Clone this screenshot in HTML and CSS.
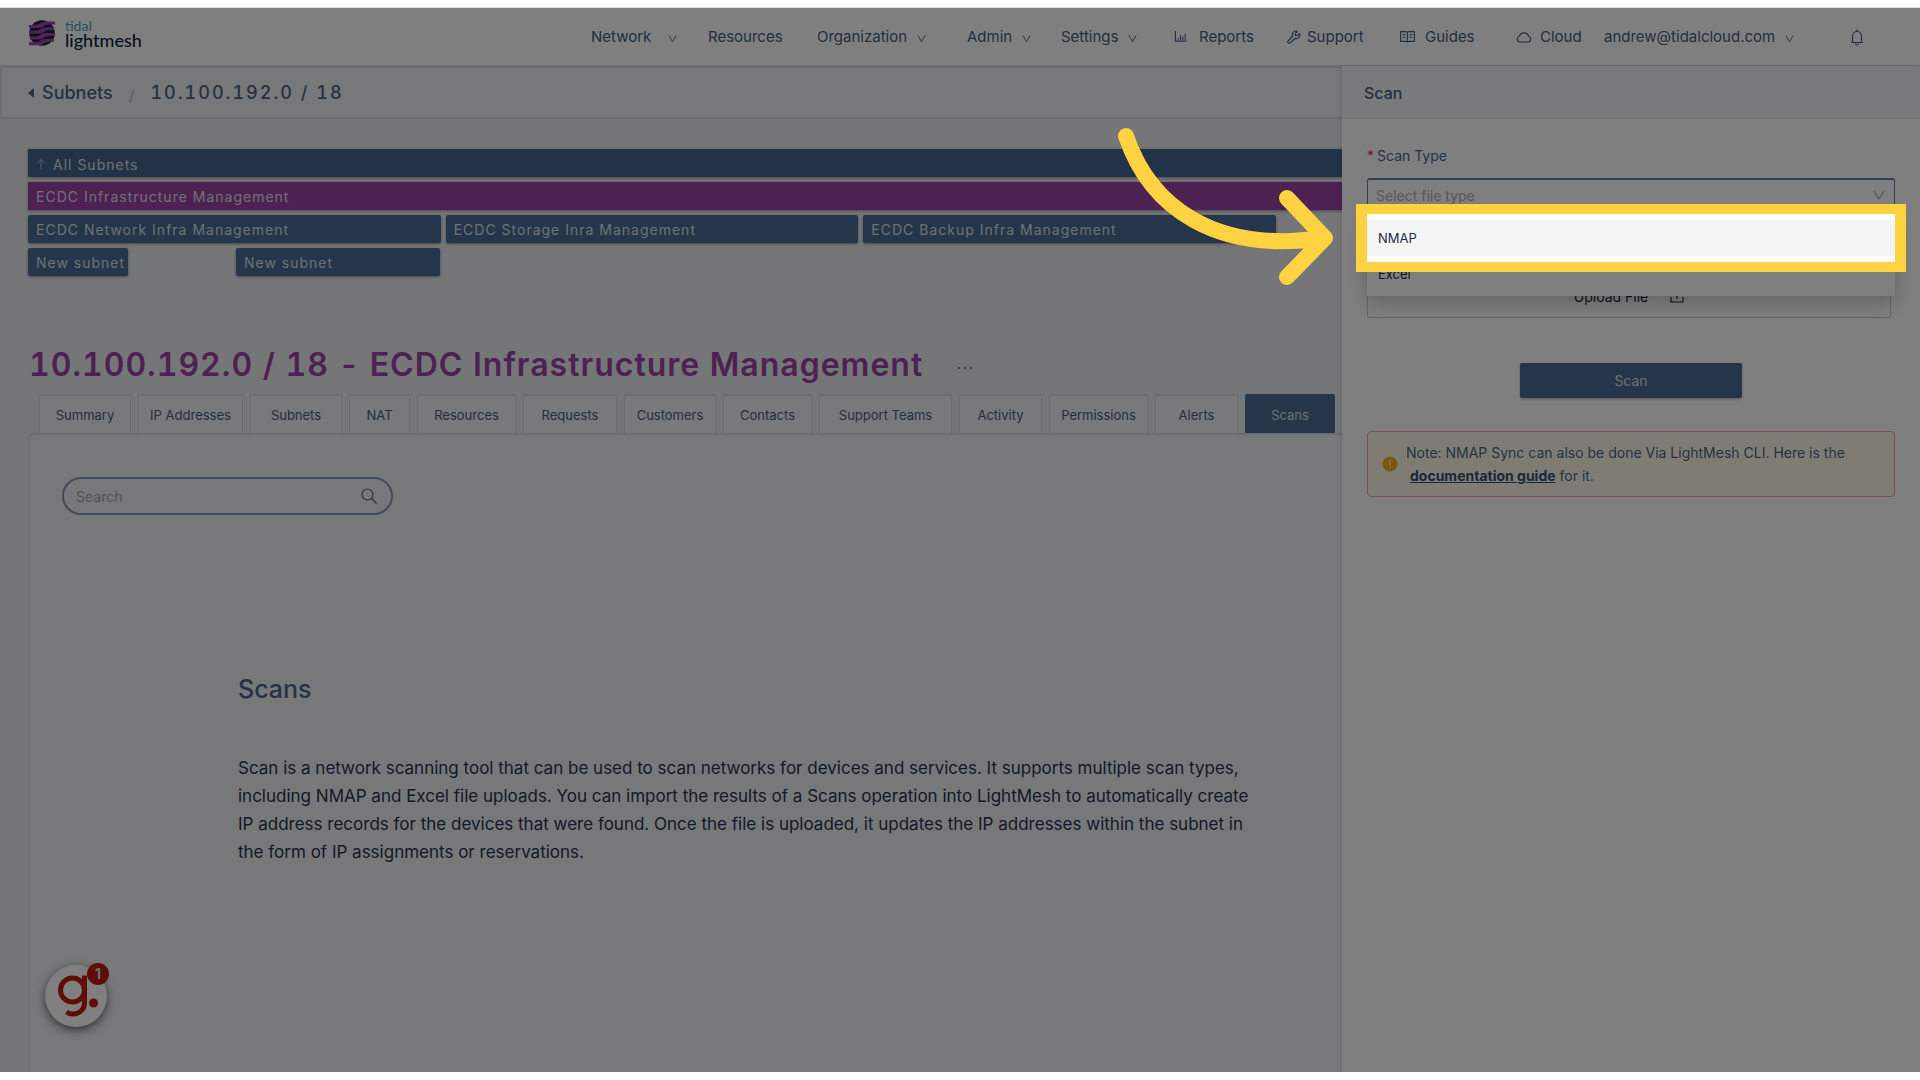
FILE: index.html
```html
<!DOCTYPE html>
<html lang="en">
<head>
<meta charset="utf-8">
<title>Tidal LightMesh - Scans</title>
<link rel="stylesheet" href="styles.css">
</head>
<body>
<svg class="defs" aria-hidden="true">
  <symbol id="chevron" viewBox="0 0 10 10"><path d="M1 1.500 5 8.500 9 1.500" fill="none" stroke="currentColor" stroke-width="1"/></symbol>
</svg>
<div class="app">
  <header class="topbar">
    <a class="logo" href="#" aria-label="Tidal LightMesh">
      <svg class="logo-mark" viewBox="0 0 26 26" aria-hidden="true">
        <circle cx="13" cy="13" r="12.800" fill="#12263c"/>
        <g fill="#a044b0">
          <path d="M0 5h6c5 0 6-3.500 11-3.500h9v3h-6c-5 0-5 3.500-10 3.500H0z"/>
          <path d="M0 10.800h6c5 0 6-3.500 11-3.500h8v3h-5c-5 0-5 3.500-10 3.500H0z"/>
          <path d="M1 16.500h5c5 0 6-3.500 11-3.500h9v3h-6c-5 0-5 3.500-10 3.500H1z"/>
          <path d="M0 22.300h6c5 0 6-3.500 11-3.500h8v3h-5c-5 0-5 3.500-10 3.500H0z"/>
        </g>
      </svg>
      <span class="logo-text"><span class="logo-top">tidal</span><span class="logo-name">lightmesh</span></span>
    </a>
    <nav class="nav">
      <a href="#">Network<svg class="chev chev-wide"><use href="#chevron"/></svg></a>
      <a href="#">Resources</a>
      <a href="#">Organization<svg class="chev"><use href="#chevron"/></svg></a>
      <a href="#">Admin<svg class="chev"><use href="#chevron"/></svg></a>
      <a href="#">Settings<svg class="chev"><use href="#chevron"/></svg></a>
      <a href="#"><svg class="ico ico-chart" viewBox="0 0 14 14"><path d="M1.500 1v11H13.500M4.500 10.500V8.500M7 10.500V5.500M9.500 10.500V7M12 10.500V4" fill="none" stroke="currentColor" stroke-width="1.200"/></svg>Reports</a>
      <a href="#"><svg class="ico" viewBox="0 0 14 14"><path d="M12.400 3.600 10.300 5.700 8.400 5.500 8.200 3.700 10.300 1.600C8.700.9 7 1.200 6 2.500 5.200 3.500 5.100 4.800 5.600 6L1.200 10.800C.6 11.500.6 12.200 1.200 12.800s1.400.6 2 0L8 8.400c1.300.5 2.700.2 3.700-.8 1.100-1.100 1.300-2.700.7-4z" fill="none" stroke="currentColor" stroke-width="1.200" stroke-linejoin="round"/></svg>Support</a>
      <a href="#"><svg class="ico ico-book" viewBox="0 0 15 14"><path d="M.6 1.600h5c1 0 1.900.4 1.900 1 0-.6.900-1 1.900-1h5v9.800h-5c-1 0-1.900.4-1.900 1.100 0-.7-.9-1.100-1.900-1.100h-5zM7.500 2.600v9.900M2.500 4.700h3M2.500 7.200h3M9.500 4.700h3M9.500 7.200h3" fill="none" stroke="currentColor" stroke-width="1.100"/></svg>Guides</a>
      <a href="#"><svg class="ico ico-cloud" viewBox="0 0 16 14"><path d="M4 12h8a3 3 0 0 0 .700-5.800A5 5 0 0 0 3.300 6.200 3 3 0 0 0 4 12z" fill="none" stroke="currentColor" stroke-width="1.200"/></svg>Cloud</a>
      <a href="#">andrew@tidalcloud.com<svg class="chev"><use href="#chevron"/></svg></a>
      <a href="#" aria-label="Notifications"><svg class="bell" viewBox="0 0 14 18"><path d="M1 14.500h12M2.500 14.500V8a4.500 4.500 0 0 1 9 0v6.500M7 3.500V1.500M5.500 15.500a1.500 1.500 0 0 0 3 0" fill="none" stroke="currentColor" stroke-width="1.200"/></svg></a>
    </nav>
  </header>

  <main class="main">
    <div class="crumbs">
      <a class="crumb-back" href="#"><svg viewBox="0 0 6 10" aria-hidden="true"><path d="M6 0v10L0 5z" fill="currentColor"/></svg>Subnets</a>
      <span class="crumb-sep">/</span>
      <span class="crumb-net">10.100.192.0 / 18</span>
    </div>

    <section class="subnets">
      <a class="bar bar-all" href="#"><svg viewBox="0 0 10 12" aria-hidden="true"><path d="M5 11V1.500M1 5.500l4-4 4 4" fill="none" stroke="currentColor"/></svg>All Subnets</a>
      <a class="bar bar-current" href="#">ECDC Infrastructure Management</a>
      <div class="bar-row">
        <a class="bar" href="#">ECDC Network Infra Management</a>
        <a class="bar" href="#">ECDC Storage Inra Management</a>
        <a class="bar" href="#">ECDC Backup Infra Management</a>
      </div>
      <div class="bar-row bar-row-small">
        <a class="bar" href="#">New subnet</a>
        <a class="bar" href="#">New subnet</a>
      </div>
    </section>

    <div class="heading">
      <h1>10.100.192.0 / 18 - ECDC Infrastructure Management</h1>
      <button class="more" type="button" aria-label="More actions"><svg viewBox="0 0 16 4"><circle cx="2" cy="2" r="1" fill="currentColor"/><circle cx="8" cy="2" r="1" fill="currentColor"/><circle cx="14" cy="2" r="1" fill="currentColor"/></svg></button>
    </div>

    <div class="tabs">
      <button type="button">Summary</button>
      <button type="button">IP Addresses</button>
      <button type="button">Subnets</button>
      <button type="button">NAT</button>
      <button type="button">Resources</button>
      <button type="button">Requests</button>
      <button type="button">Customers</button>
      <button type="button">Contacts</button>
      <button type="button">Support Teams</button>
      <button type="button">Activity</button>
      <button type="button">Permissions</button>
      <button type="button">Alerts</button>
      <button type="button" class="active">Scans</button>
    </div>

    <section class="content">
      <div class="search">
        <input type="text" placeholder="Search" aria-label="Search">
        <svg viewBox="0 0 16 16" aria-hidden="true"><circle cx="6.500" cy="6.500" r="5.500" fill="none" stroke="currentColor" stroke-width="1.200"/><path d="M10.500 10.500 15.500 15.500" stroke="currentColor" stroke-width="1.200"/></svg>
      </div>
      <article class="intro">
        <h2>Scans</h2>
        <p>Scan is a network scanning tool that can be used to scan networks for devices and services. It supports multiple scan types, including NMAP and Excel file uploads. You can import the results of a Scans operation into LightMesh to automatically create IP address records for the devices that were found. Once the file is uploaded, it updates the IP addresses within the subnet in the form of IP assignments or reservations.</p>
      </article>
    </section>
  </main>

  <button class="helper" type="button" aria-label="Help">
    <svg viewBox="0 0 62 62" aria-hidden="true"><g fill="none" stroke="#bc1a10" stroke-width="5"><circle cx="27.500" cy="25" r="12"/><path d="M39.500 10.500V38c0 9-10.500 14-18 9"/></g><circle cx="48.500" cy="38" r="4.500" fill="#bc1a10"/></svg>
    <span class="helper-count">1</span>
  </button>

  <aside class="drawer">
    <h2 class="drawer-title">Scan</h2>
    <form class="drawer-body">
      <label class="field-label" for="scan-type"><span class="req">*</span>Scan Type</label>
      <div class="select-wrap">
        <select id="scan-type"><option>Select file type</option></select>
        <svg class="select-arrow" viewBox="0 0 12 12" aria-hidden="true"><path d="M1 2l5 8 5-8" fill="none" stroke="currentColor"/></svg>
        <div class="popup">
          <ul role="listbox" aria-label="Scan Type">
            <li class="hover" role="option" aria-selected="false">NMAP</li>
            <li role="option" aria-selected="false">Excel</li>
          </ul>
          <div class="spotlight"></div>
          <svg class="arrow" viewBox="0 0 220 164" aria-hidden="true"><path d="M11 12C35 83 100 130 208 114M172 74l38 40-38 39" fill="none" stroke="#ffd242" stroke-width="16" stroke-linecap="round" stroke-linejoin="round"/></svg>
        </div>
      </div>
      <button class="upload" type="button">Upload File<svg viewBox="0 0 14 14" aria-hidden="true"><path d="M1 8v5h12V8M7 10V1.500M4 4.500l3-3 3 3" fill="none" stroke="currentColor" stroke-width="1.200"/></svg></button>
      <button class="submit" type="button">Scan</button>
      <div class="note">
        <svg viewBox="0 0 16 16" aria-hidden="true"><circle cx="8" cy="8" r="7.500" fill="#faad14"/><path d="M8 4v5M8 10.500v1.500" stroke="#fff" stroke-width="1.300"/></svg>
        <p>Note: NMAP Sync can also be done Via LightMesh CLI. Here is the <a href="#">documentation guide</a> for it.</p>
      </div>
    </form>
  </aside>
</div>
</body>
</html>
```
FILE: styles.css
```css
* { box-sizing: border-box; }
body {
  margin: 0;
  padding: 7px 0 8px;
  background: #fff;
  font-family: Inter, "Liberation Sans", sans-serif;
  font-size: 14px;
  color: #4a6588;
}
a { color: inherit; text-decoration: none; }
button { font: inherit; color: inherit; cursor: pointer; }
h1, h2, p, ul { margin: 0; padding: 0; }
.defs { position: absolute; width: 0; height: 0; }

.app {
  position: relative;
  display: flex;
  flex-direction: column;
  min-height: calc(100vh - 15px);
  overflow: hidden;
  background: #eaecef;
  border-top: 1px solid #ddd;
}

/* Top navigation */
.topbar {
  display: flex;
  justify-content: space-between;
  height: 58px;
  padding-left: 29px;
  background: #fff;
  border-bottom: 1px solid #dcdfee;
}
.logo { display: flex; align-items: center; gap: 10px; padding-bottom: 7px; }
.logo-mark { width: 26px; height: 26px; }
.logo-text { display: flex; flex-direction: column; font-family: Lato, sans-serif; }
.logo-top { font-size: 14px; line-height: 14px; color: #4aa0c0; }
.logo-name { font-size: 18px; line-height: 14px; color: #12263c; font-weight: 500; }
.nav {
  display: grid;
  grid-template-columns: 117px 109px 150px 94px 113px 113px 113px 116px 88px 246px 70px;
  align-items: center;
  font-size: 15px;
  color: #456080;
}
.nav a { display: flex; align-items: center; white-space: nowrap; }
.chev { width: 9px; height: 9px; margin: 3px 0 0 10px; }
.chev-wide { margin-left: 17px; }
.ico { width: 14px; height: 14px; margin-right: 6px; }
.ico-chart { width: 13px; height: 13px; margin-right: 12px; }
.ico-book { width: 15px; margin-right: 10px; }
.ico-cloud { width: 16px; margin-right: 8px; }
.bell { width: 14px; height: 18px; }

/* Main column, left of the drawer */
.main { flex: 1; display: flex; flex-direction: column; padding-right: 578px; }
.crumbs {
  display: flex;
  align-items: center;
  height: 53px;
  padding-left: 26px;
  border: 2px solid #d8dbe8;
  border-right: 0;
  background: #eef0f3;
  font-size: 18px;
  font-weight: 500;
}
.crumb-back { display: flex; align-items: center; gap: 8px; }
.crumb-back svg { width: 6px; height: 10px; }
.crumb-sep { margin: 4px 16px 0; font-size: 16px; font-weight: 400; color: #bcc0ca; }
.crumb-net { letter-spacing: 2px; font-variant-numeric: tabular-nums; }

.subnets { display: flex; flex-direction: column; gap: 5px; padding: 30px 0 0 28px; }
.bar {
  display: flex;
  align-items: center;
  height: 28px;
  padding-left: 8px;
  background: #4a6c96;
  color: #dde2e8;
  letter-spacing: 1px;
  white-space: nowrap;
  border-radius: 2px;
  box-shadow: 0 1px 3px rgba(0, 0, 0, .4);
}
.bar-all { gap: 7px; padding-top: 2px; background: #446690; border-radius: 0; }
.bar-all svg { width: 10px; height: 12px; opacity: .7; }
.bar-current { background: #9c42a6; border-radius: 0; }
.bar-row { display: grid; grid-template-columns: repeat(3, 1fr); gap: 5px; padding-right: 66px; }
.bar-row-small { grid-template-columns: 100px 204px; gap: 108px; }

.heading { display: flex; align-items: center; gap: 34px; padding: 68px 0 0 29px; }
h1 {
  font-size: 32px;
  line-height: 42px;
  font-weight: 600;
  letter-spacing: 1px;
  font-variant-numeric: tabular-nums;
  color: #9c42a6;
  white-space: nowrap;
}
.more { display: flex; padding: 6px 0 0; border: 0; background: none; }
.more svg { width: 16px; height: 4px; }

.tabs {
  display: grid;
  grid-template-columns: 92px 105px 92px 61px 99px 94px 92px 89px 133px 83px 99px 83px 90px;
  gap: 7px;
  padding: 8px 0 0 39px;
}
.tabs button {
  height: 39px;
  padding: 0;
  border: 1px solid #d8dbdf;
  border-width: 2px 1px 0;
  border-radius: 2px 2px 0 0;
  background: #f0f2f5;
  font-size: 13px;
  color: #456080;
  white-space: nowrap;
}
.tabs .active { background: #4a6c96; border-color: #4a6c96; color: #dde2e8; }

.content {
  flex: 1;
  margin-left: 28px;
  padding: 42px 0 0 33px;
  border: 1px solid #d8dbdf;
  border-width: 2px 0 0 1px;
  border-radius: 6px 0 0 0;
  background: #eef0f3;
}
.search {
  display: flex;
  align-items: center;
  width: 331px;
  height: 38px;
  padding: 0 14px 0 12px;
  border: 2px solid #8096b8;
  border-radius: 19px;
}
.search input { flex: 1; min-width: 0; padding: 0; border: 0; outline: 0; background: none; font: inherit; }
.search input::placeholder { color: #a0a6b0; opacity: 1; }
.search svg { width: 16px; height: 16px; }
.intro { margin: 157px 80px 0 176px; }
.intro h2 { font-size: 25px; line-height: 34px; font-weight: 500; }
.intro p { margin-top: 48px; font-size: 17px; line-height: 28px; color: #253650; }

/* Floating help bubble */
.helper {
  position: absolute;
  left: 45px;
  bottom: 45px;
  width: 62px;
  height: 62px;
  padding: 0;
  border: 0;
  border-radius: 50%;
  background: #fff;
  box-shadow: 0 3px 10px rgba(0, 0, 0, .6);
}
.helper-count {
  position: absolute;
  top: -2px;
  right: -2px;
  width: 22px;
  height: 22px;
  border-radius: 50%;
  background: #bc1a10;
  color: #ddd;
  font-size: 14px;
  line-height: 22px;
  font-weight: 700;
}

/* Drawer */
.drawer {
  position: absolute;
  top: 58px;
  right: 0;
  bottom: 0;
  width: 578px;
  background: #fff;
  box-shadow: -2px 0 4px rgba(0, 0, 0, .08);
}
.drawer-title {
  height: 53px;
  padding-left: 22px;
  border-bottom: 1px solid #e4e6ea;
  background: #f2f4f6;
  font-size: 16px;
  line-height: 54px;
  font-weight: 500;
  color: #456080;
}
.drawer-body { display: flex; flex-direction: column; padding: 26px 25px 0; }
.field-label { line-height: 22px; }
.req { margin-right: 3px; color: #e03c3c; }
.select-wrap { position: relative; margin-top: 11px; }
.select-wrap select {
  display: block;
  width: 100%;
  height: 34px;
  padding: 0 8px;
  appearance: none;
  border: 1px solid #6080a4;
  border-top-width: 2px;
  border-radius: 3px;
  background: #fff;
  font: inherit;
  color: #b0b0b0;
}
.select-arrow { position: absolute; top: 11px; right: 10px; width: 12px; height: 12px; color: #999; }
.popup {
  position: absolute;
  z-index: 2;
  top: 36px;
  left: 0;
  right: 0;
  padding: 6px 0 4px;
  background: #fff;
  box-shadow: 0 6px 20px rgba(0, 0, 0, .25);
}
.popup ul { list-style: none; }
.popup li { height: 36px; padding-left: 11px; font-size: 13px; line-height: 36px; color: #1c2c46; }
.popup .hover { background: #f4f4f4; }
.spotlight {
  position: absolute;
  top: -10px;
  left: -11px;
  right: -11px;
  height: 68px;
  border: 10px solid #ffd242;
  border-width: 10px 11px;
  box-shadow: 0 0 0 2000px rgba(0, 0, 0, .5);
}
.arrow { position: absolute; top: -90px; left: -252px; width: 220px; height: 164px; }
.upload {
  display: flex;
  align-items: center;
  justify-content: center;
  gap: 22px;
  height: 44px;
  margin: 62px 4px 0 0;
  border: 1px solid #ccc;
  border-radius: 2px;
  background: #fff;
  color: #1c2c46;
}
.upload svg { width: 14px; height: 14px; }
.submit {
  align-self: center;
  width: 222px;
  height: 35px;
  margin-top: 45px;
  border: 0;
  border-radius: 2px;
  background: #4a6c96;
  color: #dde2e8;
  box-shadow: 0 1px 3px rgba(0, 0, 0, .3);
}
.note {
  display: flex;
  align-items: center;
  gap: 8px;
  margin-top: 33px;
  padding: 9px 14px;
  border: 1px solid #f0a0a0;
  border-radius: 4px;
  background: #fffbe6;
}
.note svg { flex: none; width: 16px; height: 16px; }
.note p { line-height: 23px; }
.note a { margin-left: 4px; font-weight: 700; text-decoration: underline; color: #32507c; }
```
